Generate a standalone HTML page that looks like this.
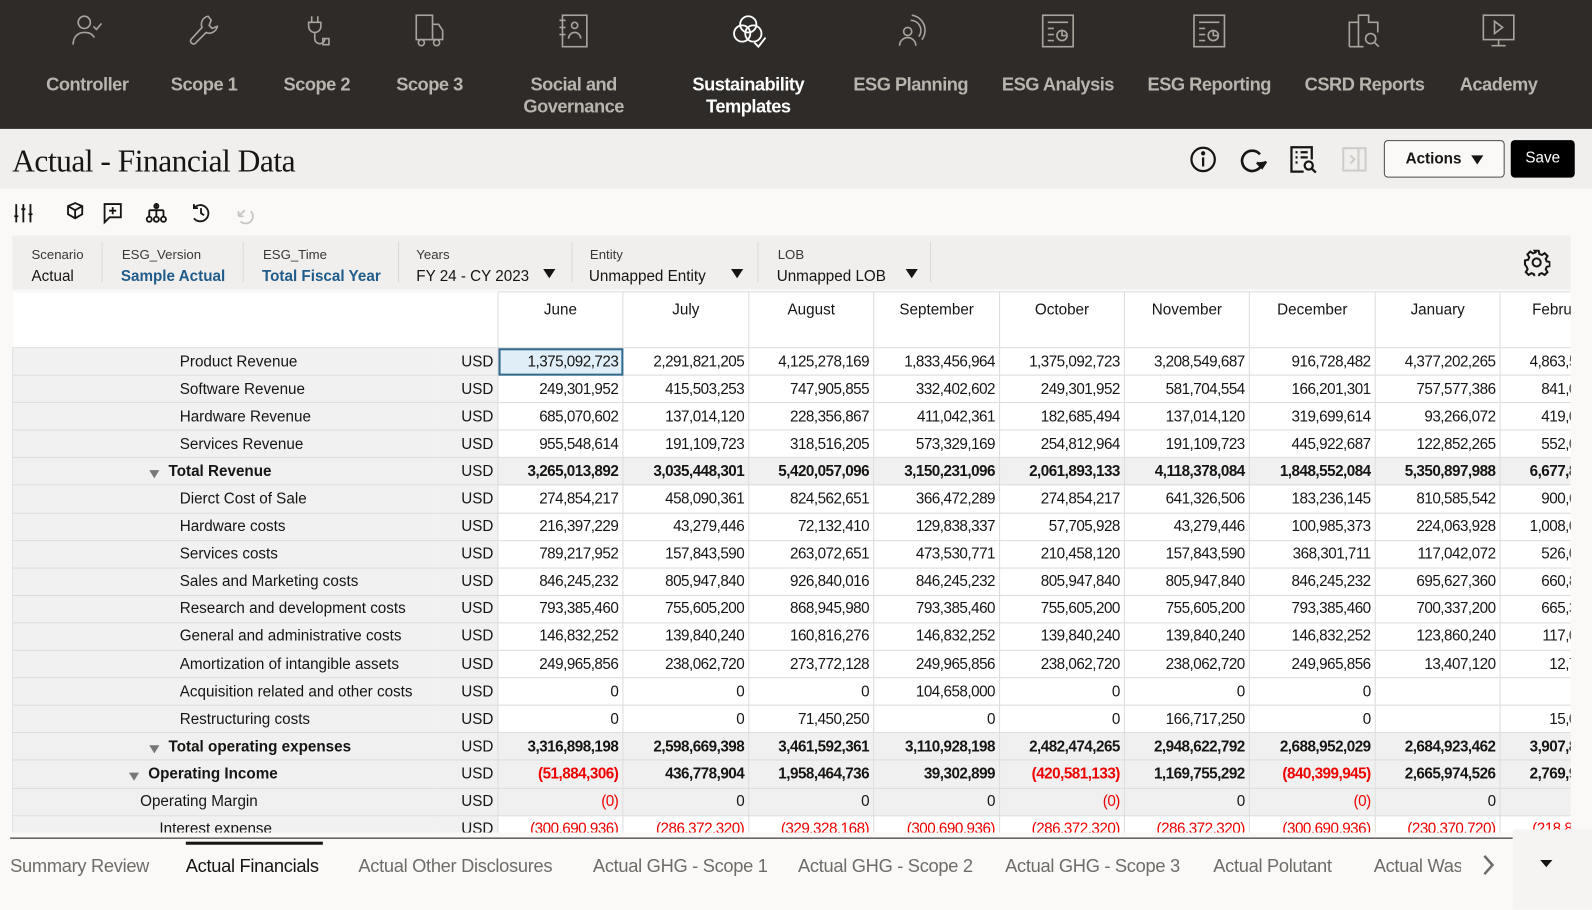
<!DOCTYPE html>
<html><head><meta charset="utf-8"><style>
*{margin:0;padding:0;box-sizing:border-box}
body{width:1592px;height:896px;overflow:hidden;background:#faf9f8;font-family:"Liberation Sans",sans-serif;color:#161513}
#w{position:relative;width:1568px;height:882px;transform:scale(1.0153);transform-origin:0 0}
.nav{position:absolute;left:0;top:0;width:1568px;height:127px;background:#2f2b28}
.ni{position:absolute;top:0;width:160px;margin-left:-80px;text-align:center;color:#b9b4ae;font-size:18px;font-weight:bold;line-height:22px;letter-spacing:-0.5px}
.ni svg{display:block;margin:12px auto 0;width:36px;height:36px}
.ni .t{position:absolute;top:72px;left:0;width:160px}
.ni.act{color:#fff}
.titlebar{position:absolute;left:0;top:127px;width:1568px;height:59px;background:#f1efed}
h1{position:absolute;left:12px;top:141px;font-family:"Liberation Serif",serif;font-weight:normal;font-size:31px;letter-spacing:-0.5px}
.btn{position:absolute;top:138px;height:37px;border-radius:4px;font-size:15px;font-weight:bold;text-align:center;line-height:35px}
.pov{position:absolute;left:12px;top:232px;width:1535px;height:53px;background:#f1efed}
.pl{position:absolute;top:11px;font-size:13px;color:#3a3633}
.pv{position:absolute;top:32px;font-size:15px;color:#161513}
.pv.b{color:#1f5c8b;font-weight:bold}
.dv{position:absolute;top:6px;width:1px;height:40px;background:#dcd9d5}
.tri{display:inline-block;width:0;height:0;border-left:6px solid transparent;border-right:6px solid transparent;border-top:9px solid #161513;vertical-align:middle}
.grid{position:absolute;left:12px;top:287px;width:1535px;height:533px;overflow:hidden}
table{border-collapse:collapse;table-layout:fixed;width:1541px}
td{height:27.1px;border:1px solid #dcdcdc;font-size:15px;letter-spacing:-0.5px;white-space:nowrap;overflow:hidden;padding:0 4px;text-align:right;background:#fff}
td.l{text-align:left;background:#f1f1f1;border-right-color:#f1f1f1;letter-spacing:0}
td.u{background:#f1f1f1;text-align:right;padding-right:4px;letter-spacing:0}
tr.g td{background:#f0f0f0}
tr.b td{font-weight:bold}
tr.b td.u{font-weight:normal}
.r{color:#e00}
th{height:55px;font-weight:normal;font-size:15px;vertical-align:top;padding-top:9px;border:1px solid #dcdcdc;background:#fff;white-space:nowrap}
th.e{background:#fff;border:none;border-bottom:1px solid #dcdcdc}
.ar{display:inline-block;width:0;height:0;border-left:5px solid transparent;border-right:5px solid transparent;border-top:8px solid #777;margin-right:9px;vertical-align:-2px}
.tabs{position:absolute;left:0;top:825px;width:1568px;height:71px;background:#faf9f8}
.tb{position:absolute;top:18px;font-size:18px;color:#6f6b67;letter-spacing:-0.3px}
</style></head><body><div id="w">
<div class="nav">
 <div class="ni" style="left:86px"><svg viewBox="0 0 36 36" fill="none" stroke="#a9a39d" stroke-width="1.6"><circle cx="15" cy="10" r="6"/><path d="M4 32c0-8 5-12 11-12s8 2 10 5"/><path d="M24 14l3 3 5-6"/></svg><div class="t">Controller</div></div>
 <div class="ni" style="left:201px"><svg viewBox="0 0 36 36" fill="none" stroke="#a9a39d" stroke-width="1.6"><path d="M22 4a8 8 0 0 0-6 11L5 27a3 3 0 0 0 4 4l11-11a8 8 0 0 0 11-6l-5 2-3-3 2-5z"/></svg><div class="t">Scope 1</div></div>
 <div class="ni" style="left:312px"><svg viewBox="0 0 36 36" fill="none" stroke="#a9a39d" stroke-width="1.6"><path d="M13 4v6M19 4v6M10 10h12v4a6 6 0 0 1-12 0z M16 20v6a5 5 0 0 0 10 0"/><rect x="24" y="26" width="6" height="6"/></svg><div class="t">Scope 2</div></div>
 <div class="ni" style="left:423px"><svg viewBox="0 0 36 36" fill="none" stroke="#a9a39d" stroke-width="1.6"><rect x="5" y="3" width="16" height="24"/><path d="M21 12h6l4 6v9H21"/><circle cx="10" cy="30" r="3"/><circle cx="25" cy="30" r="3"/></svg><div class="t">Scope 3</div></div>
 <div class="ni" style="left:565px"><svg viewBox="0 0 36 36" fill="none" stroke="#a9a39d" stroke-width="1.6"><rect x="7" y="3" width="24" height="31"/><circle cx="19" cy="13" r="3"/><path d="M13 26a6 6 0 0 1 12 0M4 8h6M4 15h6M4 22h6"/></svg><div class="t">Social and<br>Governance</div></div>
 <div class="ni act" style="left:737px"><svg viewBox="0 0 36 36" fill="none" stroke="#fff" stroke-width="1.8"><circle cx="18" cy="12" r="8"/><circle cx="12" cy="21" r="8"/><circle cx="23" cy="21" r="8"/><path d="M24 30l4 4 7-9"/></svg><div class="t">Sustainability<br>Templates</div></div>
 <div class="ni" style="left:897px"><svg viewBox="0 0 36 36" fill="none" stroke="#a9a39d" stroke-width="1.6"><circle cx="15" cy="19" r="4"/><path d="M7 33a8 8 0 0 1 16 0M18 8a10 10 0 0 1 8 16M19 3a15 15 0 0 1 10 24"/></svg><div class="t">ESG Planning</div></div>
 <div class="ni" style="left:1042px"><svg viewBox="0 0 36 36" fill="none" stroke="#a9a39d" stroke-width="1.6"><rect x="3" y="3" width="30" height="31"/><path d="M8 10h20M8 16h6M8 22h6M8 28h6"/><circle cx="22" cy="23" r="5"/><path d="M22 18v5h5"/></svg><div class="t">ESG Analysis</div></div>
 <div class="ni" style="left:1191px"><svg viewBox="0 0 36 36" fill="none" stroke="#a9a39d" stroke-width="1.6"><rect x="3" y="3" width="30" height="31"/><path d="M8 10h20M8 16h6M8 22h6M8 28h6"/><circle cx="22" cy="23" r="5"/><path d="M22 18v5h5"/></svg><div class="t">ESG Reporting</div></div>
 <div class="ni" style="left:1344px"><svg viewBox="0 0 36 36" fill="none" stroke="#a9a39d" stroke-width="1.6"><path d="M3 34V10h9V3h10v7h9v10M3 34h14M12 10v24"/><circle cx="24" cy="26" r="5"/><path d="M28 30l4 4"/></svg><div class="t">CSRD Reports</div></div>
 <div class="ni" style="left:1476px"><svg viewBox="0 0 36 36" fill="none" stroke="#a9a39d" stroke-width="1.6"><rect x="3" y="3" width="30" height="24"/><path d="M14 9l8 6-8 6zM18 27v6M11 33h14"/></svg><div class="t">Academy</div></div>
</div>
<div class="titlebar"></div>
<h1>Actual - Financial Data</h1>
<svg style="position:absolute;left:1171px;top:143px" width="28" height="28" viewBox="0 0 28 28" fill="none" stroke="#161513" stroke-width="2.2"><circle cx="14" cy="14" r="11.5"/><path d="M14 12v9"/><circle cx="14" cy="8" r="1" fill="#161513"/></svg>
<svg style="position:absolute;left:1220px;top:144px" width="28" height="28" viewBox="0 0 28 28" fill="none" stroke="#161513" stroke-width="2.6"><path d="M21 8A10 10 0 1 0 23 17"/><path d="M18 16l5 5 4-6" fill="#161513"/></svg>
<svg style="position:absolute;left:1269px;top:142px" width="30" height="30" viewBox="0 0 30 30" fill="none" stroke="#161513" stroke-width="2.2"><path d="M15 27H3V3h20v12"/><path d="M7 8h2M12 8h7M7 13h2M12 13h7M7 18h2"/><circle cx="20" cy="21" r="4"/><path d="M23 24l4 4"/></svg>
<svg style="position:absolute;left:1321px;top:144px" width="26" height="26" viewBox="0 0 26 26" fill="none" stroke="#cfcbc7" stroke-width="2"><rect x="2" y="2" width="22" height="22"/><path d="M17 2v22M9 9l4 4-4 4"/></svg>
<div class="btn" style="left:1363px;width:119px;border:1px solid #4f4a45;background:#faf9f8">Actions <span class="tri" style="border-width:9px 6px 0;margin-left:5px"></span></div>
<div class="btn" style="left:1488px;width:63px;background:#000;color:#fff;font-weight:normal">Save</div>
<svg style="position:absolute;left:13px;top:199px" width="250" height="22" viewBox="0 0 250 22" fill="none" stroke="#161513" stroke-width="1.8">
 <path d="M3 2v18M10 2v18M17 2v18M1 14h4M8 7h4M15 12h4"/>
 <path d="M54 4l7-3 7 3v8l-7 4-7-4zM54 4l7 4 7-4M61 8v8"/>
 <path d="M90 2h16v13H95l-5 5zM98 5v7M94.5 8.5h7"/>
 <path d="M141 1v5M134 8h14M134 8v6M141 8v6M148 8v6"/><circle cx="141" cy="4" r="2"/><circle cx="134" cy="17" r="2.5"/><circle cx="141" cy="17" r="2.5"/><circle cx="148" cy="17" r="2.5"/>
 <path d="M178 6a8 8 0 1 1 0 10M178 2v4h4M185 6v5l3 2"/>
 <path stroke="#c9c5c1" d="M222 14l6-6M222 14v-5M222 14h5M224 19a7 7 0 0 0 10-10"/>
</svg>
<div class="pov">
 <div class="pl" style="left:19px">Scenario</div><div class="pv" style="left:19px">Actual</div>
 <div class="dv" style="left:88px"></div>
 <div class="pl" style="left:108px">ESG_Version</div><div class="pv b" style="left:107px">Sample Actual</div>
 <div class="dv" style="left:227px"></div>
 <div class="pl" style="left:247px">ESG_Time</div><div class="pv b" style="left:246px">Total Fiscal Year</div>
 <div class="dv" style="left:380px"></div>
 <div class="pl" style="left:398px">Years</div><div class="pv" style="left:398px">FY 24 - CY 2023</div><span class="tri" style="position:absolute;left:523px;top:33px"></span>
 <div class="dv" style="left:551px"></div>
 <div class="pl" style="left:569px">Entity</div><div class="pv" style="left:568px">Unmapped Entity</div><span class="tri" style="position:absolute;left:708px;top:33px"></span>
 <div class="dv" style="left:734px"></div>
 <div class="pl" style="left:754px">LOB</div><div class="pv" style="left:753px">Unmapped LOB</div><span class="tri" style="position:absolute;left:880px;top:33px"></span>
 <div class="dv" style="left:904px"></div>
 <svg style="position:absolute;left:1488px;top:13px" width="27" height="27" viewBox="0 0 27 27" fill="none" stroke="#161513" stroke-width="2"><circle cx="13.5" cy="13.5" r="4"/><path d="M11.5 2h4l.7 3.2 2.4 1 2.8-1.8 2.8 2.8-1.8 2.8 1 2.4 3.1.7v4l-3.1.7-1 2.4 1.8 2.8-2.8 2.8-2.8-1.8-2.4 1-.7 3.2h-4l-.7-3.2-2.4-1-2.8 1.8-2.8-2.8 1.8-2.8-1-2.4L2 15.5v-4l3.2-.7 1-2.4-1.8-2.8 2.8-2.8 2.8 1.8 2.4-1z"/></svg>
</div>
<div class="grid"><table style="width:1588px">
<colgroup><col style="width:418px"><col style="width:60px"><col style="width:123px"><col style="width:124px"><col style="width:123px"><col style="width:124px"><col style="width:123px"><col style="width:123px"><col style="width:124px"><col style="width:123px"><col style="width:123px"></colgroup>
<tr><th class="e"></th><th class="e" style="border-right:1px solid #dcdcdc"></th><th>June</th><th>July</th><th>August</th><th>September</th><th>October</th><th>November</th><th>December</th><th>January</th><th>February</th></tr>
<tr><td class="l" style="padding-left:164px">Product Revenue</td><td class="u">USD</td><td style="background:#dfeef7;outline:2px solid #316a8c;outline-offset:-2px">1,375,092,723</td><td>2,291,821,205</td><td>4,125,278,169</td><td>1,833,456,964</td><td>1,375,092,723</td><td>3,208,549,687</td><td>916,728,482</td><td>4,377,202,265</td><td>4,863,500,000</td></tr>
<tr><td class="l" style="padding-left:164px">Software Revenue</td><td class="u">USD</td><td>249,301,952</td><td>415,503,253</td><td>747,905,855</td><td>332,402,602</td><td>249,301,952</td><td>581,704,554</td><td>166,201,301</td><td>757,577,386</td><td>841,000,000</td></tr>
<tr><td class="l" style="padding-left:164px">Hardware Revenue</td><td class="u">USD</td><td>685,070,602</td><td>137,014,120</td><td>228,356,867</td><td>411,042,361</td><td>182,685,494</td><td>137,014,120</td><td>319,699,614</td><td>93,266,072</td><td>419,000,000</td></tr>
<tr><td class="l" style="padding-left:164px">Services Revenue</td><td class="u">USD</td><td>955,548,614</td><td>191,109,723</td><td>318,516,205</td><td>573,329,169</td><td>254,812,964</td><td>191,109,723</td><td>445,922,687</td><td>122,852,265</td><td>552,000,000</td></tr>
<tr class="g b"><td class="l" style="padding-left:134px"><span class="ar"></span>Total Revenue</td><td class="u">USD</td><td>3,265,013,892</td><td>3,035,448,301</td><td>5,420,057,096</td><td>3,150,231,096</td><td>2,061,893,133</td><td>4,118,378,084</td><td>1,848,552,084</td><td>5,350,897,988</td><td>6,677,800,000</td></tr>
<tr><td class="l" style="padding-left:164px">Dierct Cost of Sale</td><td class="u">USD</td><td>274,854,217</td><td>458,090,361</td><td>824,562,651</td><td>366,472,289</td><td>274,854,217</td><td>641,326,506</td><td>183,236,145</td><td>810,585,542</td><td>900,600,000</td></tr>
<tr><td class="l" style="padding-left:164px">Hardware costs</td><td class="u">USD</td><td>216,397,229</td><td>43,279,446</td><td>72,132,410</td><td>129,838,337</td><td>57,705,928</td><td>43,279,446</td><td>100,985,373</td><td>224,063,928</td><td>1,008,000,000</td></tr>
<tr><td class="l" style="padding-left:164px">Services costs</td><td class="u">USD</td><td>789,217,952</td><td>157,843,590</td><td>263,072,651</td><td>473,530,771</td><td>210,458,120</td><td>157,843,590</td><td>368,301,711</td><td>117,042,072</td><td>526,000,000</td></tr>
<tr><td class="l" style="padding-left:164px">Sales and Marketing costs</td><td class="u">USD</td><td>846,245,232</td><td>805,947,840</td><td>926,840,016</td><td>846,245,232</td><td>805,947,840</td><td>805,947,840</td><td>846,245,232</td><td>695,627,360</td><td>660,800,000</td></tr>
<tr><td class="l" style="padding-left:164px">Research and development costs</td><td class="u">USD</td><td>793,385,460</td><td>755,605,200</td><td>868,945,980</td><td>793,385,460</td><td>755,605,200</td><td>755,605,200</td><td>793,385,460</td><td>700,337,200</td><td>665,300,000</td></tr>
<tr><td class="l" style="padding-left:164px">General and administrative costs</td><td class="u">USD</td><td>146,832,252</td><td>139,840,240</td><td>160,816,276</td><td>146,832,252</td><td>139,840,240</td><td>139,840,240</td><td>146,832,252</td><td>123,860,240</td><td>117,000,000</td></tr>
<tr><td class="l" style="padding-left:164px">Amortization of intangible assets</td><td class="u">USD</td><td>249,965,856</td><td>238,062,720</td><td>273,772,128</td><td>249,965,856</td><td>238,062,720</td><td>238,062,720</td><td>249,965,856</td><td>13,407,120</td><td>12,700,000</td></tr>
<tr><td class="l" style="padding-left:164px">Acquisition related and other costs</td><td class="u">USD</td><td>0</td><td>0</td><td>0</td><td>104,658,000</td><td>0</td><td>0</td><td>0</td><td></td><td></td></tr>
<tr><td class="l" style="padding-left:164px">Restructuring costs</td><td class="u">USD</td><td>0</td><td>0</td><td>71,450,250</td><td>0</td><td>0</td><td>166,717,250</td><td>0</td><td></td><td>15,000,000</td></tr>
<tr class="g b"><td class="l" style="padding-left:134px"><span class="ar"></span>Total operating expenses</td><td class="u">USD</td><td>3,316,898,198</td><td>2,598,669,398</td><td>3,461,592,361</td><td>3,110,928,198</td><td>2,482,474,265</td><td>2,948,622,792</td><td>2,688,952,029</td><td>2,684,923,462</td><td>3,907,800,000</td></tr>
<tr class="g b"><td class="l" style="padding-left:114px"><span class="ar"></span>Operating Income</td><td class="u">USD</td><td class="r">(51,884,306)</td><td>436,778,904</td><td>1,958,464,736</td><td>39,302,899</td><td class="r">(420,581,133)</td><td>1,169,755,292</td><td class="r">(840,399,945)</td><td>2,665,974,526</td><td>2,769,900,000</td></tr>
<tr class="g"><td class="l" style="padding-left:125px">Operating Margin</td><td class="u">USD</td><td class="r">(0)</td><td>0</td><td>0</td><td>0</td><td class="r">(0)</td><td>0</td><td class="r">(0)</td><td>0</td><td></td></tr>
<tr><td class="l" style="padding-left:144px">Interest expense</td><td class="u">USD</td><td class="r">(300,690,936)</td><td class="r">(286,372,320)</td><td class="r">(329,328,168)</td><td class="r">(300,690,936)</td><td class="r">(286,372,320)</td><td class="r">(286,372,320)</td><td class="r">(300,690,936)</td><td class="r">(230,370,720)</td><td class="r">(218,800,000)</td></tr>
</table></div>
<div class="tabs">
 <div style="position:absolute;left:10px;top:0;width:1480px;height:1px;background:#161513"></div>
 <div style="position:absolute;left:183px;top:4px;width:135px;height:3px;background:#161513"></div>
 <div class="tb" style="left:10px">Summary Review</div>
 <div class="tb" style="left:183px;color:#161513">Actual Financials</div>
 <div class="tb" style="left:353px">Actual Other Disclosures</div>
 <div class="tb" style="left:584px">Actual GHG - Scope 1</div>
 <div class="tb" style="left:786px">Actual GHG - Scope 2</div>
 <div class="tb" style="left:990px">Actual GHG - Scope 3</div>
 <div class="tb" style="left:1195px">Actual Polutant</div>
 <div class="tb" style="left:1353px;width:86px;overflow:hidden;white-space:nowrap">Actual Waste</div>
 <svg style="position:absolute;left:1458px;top:15px" width="16" height="24" viewBox="0 0 16 24" fill="none" stroke="#6f6b67" stroke-width="2.5"><path d="M4 3l8 9-8 9"/></svg>
 <div style="position:absolute;left:1490px;top:-8px;width:102px;height:79px;background:#f5f4f2"></div>
 <span style="position:absolute;left:1517px;top:22px;width:0;height:0;border-left:6px solid transparent;border-right:6px solid transparent;border-top:7px solid #161513"></span>
</div>
</div></body></html>
